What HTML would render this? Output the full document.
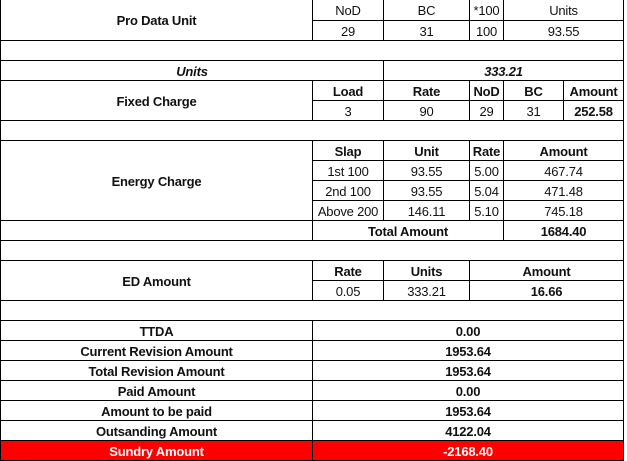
<!DOCTYPE html>
<html><head><meta charset="utf-8"><style>
html,body{margin:0;padding:0;background:#fff;width:627px;height:461px;overflow:hidden}
.c{position:absolute;box-sizing:border-box;border:1px solid #000;font-family:"Liberation Sans",Arial,sans-serif;font-size:13px;font-weight:bold;color:#111;display:flex;align-items:center;justify-content:center;padding-top:1px;white-space:nowrap;letter-spacing:-0.2px}
.n{font-weight:normal}
.i{font-style:italic}
.r{background:#ff0000;color:#fff}
</style></head><body>
<div id="t"></div>
<script>
const A=[
[0,-1,312,40,'Pro Data Unit',''],
[312,-1,383,20,'NoD','n'],[383,-1,469,20,'BC','n'],[469,-1,503,20,'*100','n'],[503,-1,623,20,'Units','n'],
[312,20,383,40,'29','n'],[383,20,469,40,'31','n'],[469,20,503,40,'100','n'],[503,20,623,40,'93.55','n'],
[0,40,623,60,'',''],
[0,60,383,80,'Units','i'],[383,60,623,80,'333.21','i'],
[0,80,312,120,'Fixed Charge',''],
[312,80,383,100,'Load',''],[383,80,469,100,'Rate',''],[469,80,503,100,'NoD',''],[503,80,563,100,'BC',''],[563,80,623,100,'Amount',''],
[312,100,383,120,'3','n'],[383,100,469,120,'90','n'],[469,100,503,120,'29','n'],[503,100,563,120,'31','n'],[563,100,623,120,'252.58',''],
[0,120,623,140,'',''],
[0,140,312,220,'Energy Charge',''],
[312,140,383,160,'Slap',''],[383,140,469,160,'Unit',''],[469,140,503,160,'Rate',''],[503,140,623,160,'Amount',''],
[312,160,383,180,'1st 100','n'],[383,160,469,180,'93.55','n'],[469,160,503,180,'5.00','n'],[503,160,623,180,'467.74','n'],
[312,180,383,200,'2nd 100','n'],[383,180,469,200,'93.55','n'],[469,180,503,200,'5.04','n'],[503,180,623,200,'471.48','n'],
[312,200,383,220,'Above 200','n'],[383,200,469,220,'146.11','n'],[469,200,503,220,'5.10','n'],[503,200,623,220,'745.18','n'],
[0,220,312,240,'',''],[312,220,503,240,'Total Amount',''],[503,220,623,240,'1684.40',''],
[0,240,623,260,'',''],
[0,260,312,300,'ED Amount',''],
[312,260,383,280,'Rate',''],[383,260,469,280,'Units',''],[469,260,623,280,'Amount',''],
[312,280,383,300,'0.05','n'],[383,280,469,300,'333.21','n'],[469,280,623,300,'16.66',''],
[0,300,623,320,'',''],
[0,320,312,340,'TTDA',''],[312,320,623,340,'0.00',''],
[0,340,312,360,'Current Revision Amount',''],[312,340,623,360,'1953.64',''],
[0,360,312,380,'Total Revision Amount',''],[312,360,623,380,'1953.64',''],
[0,380,312,400,'Paid Amount',''],[312,380,623,400,'0.00',''],
[0,400,312,420,'Amount to be paid',''],[312,400,623,420,'1953.64',''],
[0,420,312,440,'Outsanding Amount',''],[312,420,623,440,'4122.04',''],
[0,440,312,460,'Sundry Amount','r'],[312,440,623,460,'-2168.40','r']
];
let h='';
for(const [x1,y1,x2,y2,t,c] of A){h+=`<div class="c ${c}" style="left:${x1}px;top:${y1}px;width:${x2-x1+1}px;height:${y2-y1+1}px">${t}</div>`;}
document.getElementById('t').innerHTML=h;
</script>
</body></html>
